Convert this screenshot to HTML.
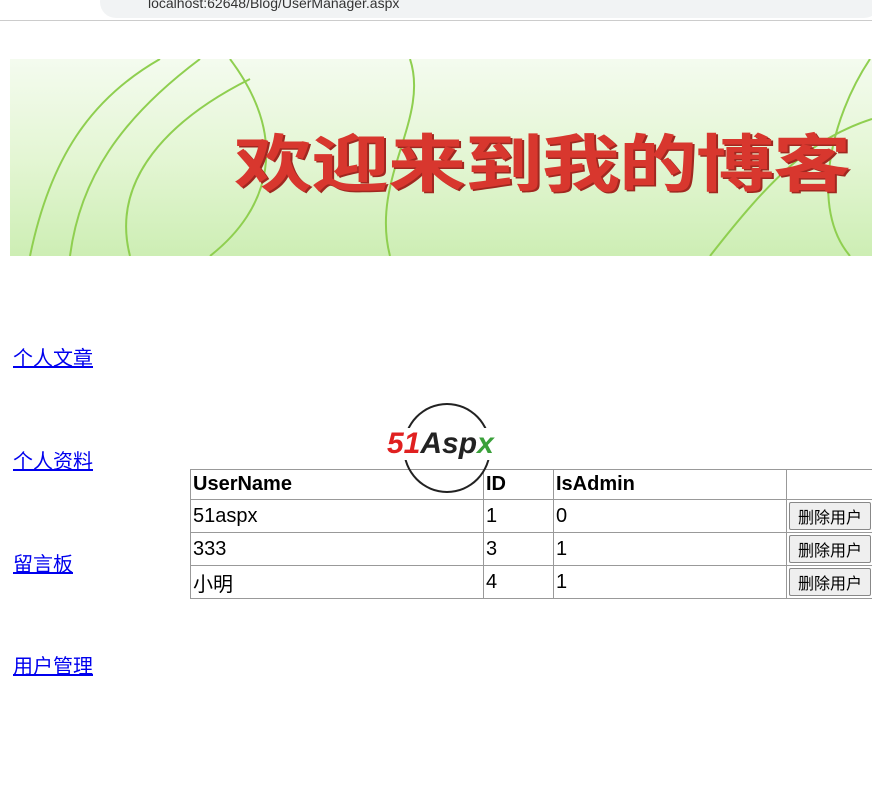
<!DOCTYPE html>
<html><head><meta charset="utf-8"><style>
body{margin:0;width:872px;height:803px;overflow:hidden;background:#fff;font-family:"Liberation Sans","Noto Sans CJK SC",sans-serif;position:relative}
.bar{position:absolute;left:0;top:0;width:872px;height:20px;background:#fff;border-bottom:1px solid #ccc}
.addr{position:absolute;left:100px;top:-14px;width:780px;height:32px;border-radius:16px;background:#f1f3f4}
.url{position:absolute;left:148px;top:-5px;font-size:14px;color:#333}
.banner{position:absolute;left:10px;top:59px;width:862px;height:197px;background:linear-gradient(180deg,#f4fbef 0%,#e4f6d4 50%,#cdeeb4 100%);overflow:hidden}
.banner .t{position:absolute;left:224px;top:62px;font-size:78px;line-height:90px;font-weight:bold;color:#d8372e;letter-spacing:-1px;white-space:nowrap;text-shadow:2px 2px 0 #a02820;transform:scaleY(0.8);transform-origin:0 40%}
a{position:absolute;left:13px;font-size:20px;color:#00e;text-decoration:underline}
table{position:absolute;left:190px;top:469px;border-collapse:collapse;font-size:20px;table-layout:fixed;width:700px}
td{border:1px solid #999;height:32px;padding:0 2px;color:#000;vertical-align:middle}
th{border:1px solid #999;height:29px;padding:0 2px;text-align:left}
button{font-size:16px;font-family:"Liberation Sans","Noto Sans CJK SC",sans-serif;padding:0 8px;border:1px solid #888;border-radius:2px;background:#efefef;height:28px;white-space:nowrap}
.logo{position:absolute;left:403px;top:403px;width:84px;height:86px;border:2px solid #222;border-radius:50%}
.lt{position:absolute;left:387px;top:428px;font-size:30px;font-weight:bold;font-style:italic;white-space:nowrap;background:#fff;line-height:32px}
</style></head><body>
<div class="bar"><div class="addr"></div><div class="url">localhost:62648/Blog/UserManager.aspx</div></div>
<div class="banner">
<svg width="862" height="197" style="position:absolute;left:0;top:0" fill="none" stroke="#8fcf50" stroke-width="2">
<path d="M20 197 C40 100 80 40 150 0"/><path d="M60 197 C70 120 110 60 190 0"/><path d="M120 197 C100 120 160 60 240 20"/><path d="M200 197 C260 150 280 80 220 0"/><path d="M380 197 C360 120 420 60 400 0"/><path d="M840 197 C800 150 820 60 860 0"/><path d="M700 197 C760 120 800 80 862 60"/>
</svg>
<div class="t">欢迎来到我的博客</div></div>
<a style="top:342px">个人文章</a>
<a style="top:445px">个人资料</a>
<a style="top:548px">留言板</a>
<a style="top:650px">用户管理</a>
<table>
<col style="width:293px"><col style="width:70px"><col style="width:233px"><col style="width:104px">
<tr><th>UserName</th><th>ID</th><th>IsAdmin</th><th></th></tr>
<tr><td>51aspx</td><td>1</td><td>0</td><td><button>删除用户</button></td></tr>
<tr><td>333</td><td>3</td><td>1</td><td><button>删除用户</button></td></tr>
<tr><td>小明</td><td>4</td><td>1</td><td><button>删除用户</button></td></tr>
</table>
<div class="logo"></div>
<div class="lt"><span style="color:#e02020">51</span><span style="color:#222">Asp</span><span style="color:#3aa03a">x</span></div>
</body></html>
